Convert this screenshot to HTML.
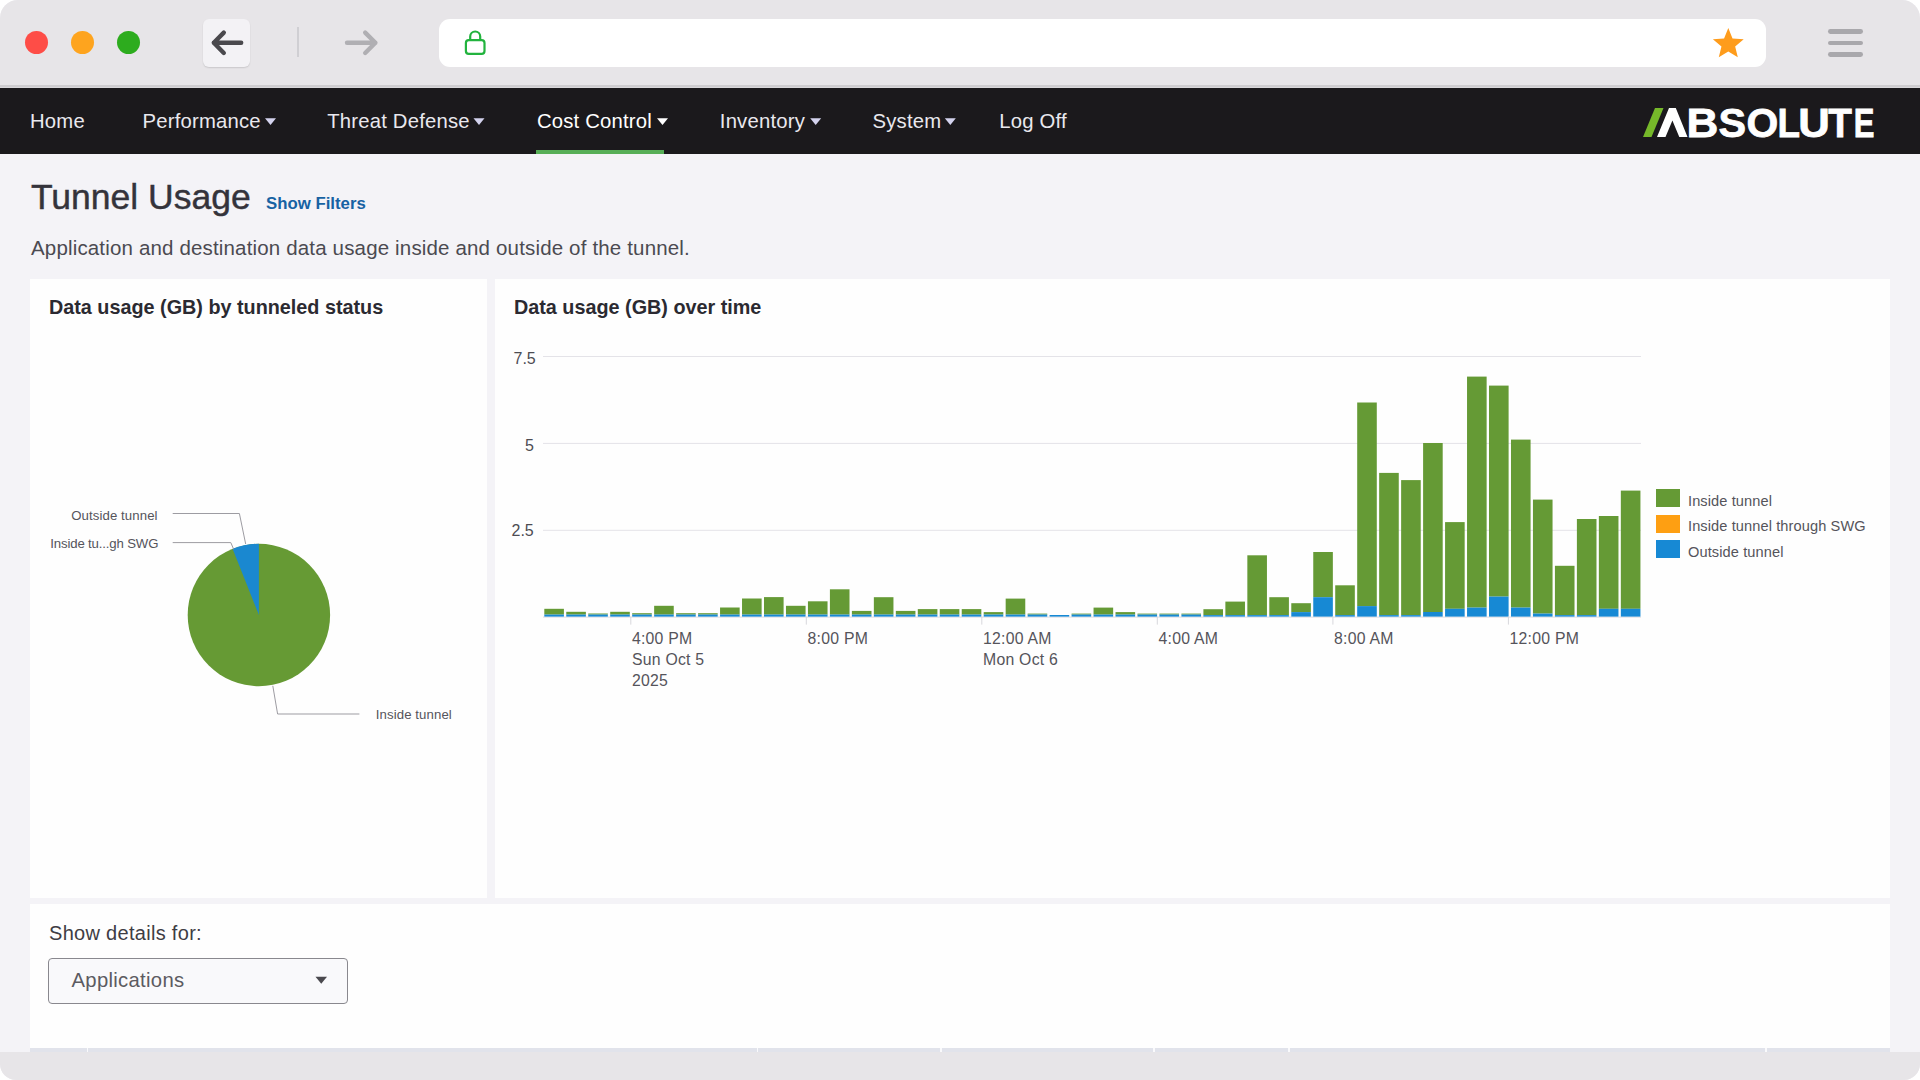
<!DOCTYPE html>
<html><head><meta charset="utf-8"><style>
html,body{margin:0;padding:0;background:#ffffff;}
body{width:1920px;height:1080px;position:relative;overflow:hidden;font-family:"Liberation Sans",sans-serif;}
#win{position:absolute;left:0;top:0;width:1920px;height:1080px;border-radius:18px 18px 16px 16px;overflow:hidden;background:#f4f3f7;}
.t{position:absolute;white-space:nowrap;line-height:1;}
</style></head><body><div id="win">
<div style="position:absolute;left:0;top:0;width:1920px;height:85px;background:#e7e5e8"></div>
<div style="position:absolute;left:0;top:85px;width:1920px;height:2px;background:#cfcdd0"></div>
<div style="position:absolute;left:0;top:87px;width:1920px;height:1px;background:#dad8db"></div>
<div style="position:absolute;left:25.4px;top:31.0px;width:22.8px;height:22.8px;border-radius:50%;background:#fe4d47"></div>
<div style="position:absolute;left:71.2px;top:31.0px;width:22.8px;height:22.8px;border-radius:50%;background:#fea41e"></div>
<div style="position:absolute;left:117.1px;top:31.0px;width:22.8px;height:22.8px;border-radius:50%;background:#2dac1e"></div>
<div style="position:absolute;left:203px;top:19px;width:47px;height:48px;border-radius:6px;background:#f3f2f5;box-shadow:0 1px 1.5px rgba(0,0,0,0.13)"></div>
<div style="position:absolute;left:297.2px;top:27px;width:1.5px;height:30px;background:#d0cfd3"></div>
<div style="position:absolute;left:439px;top:19px;width:1327px;height:47.5px;border-radius:11px;background:#ffffff"></div>
<div style="position:absolute;left:1828px;top:28.9px;width:35px;height:4.8px;border-radius:2.4px;background:#a9a8ac"></div>
<div style="position:absolute;left:1828px;top:40.6px;width:35px;height:4.8px;border-radius:2.4px;background:#a9a8ac"></div>
<div style="position:absolute;left:1828px;top:51.9px;width:35px;height:4.8px;border-radius:2.4px;background:#a9a8ac"></div>
<svg style="position:absolute;left:0;top:0" width="1920" height="88">
<path d="M241.2 42.8 H213.8 M223.8 32.6 L213.8 42.8 L223.8 53" fill="none" stroke="#4a494d" stroke-width="4.4" stroke-linecap="round" stroke-linejoin="round"/>
<path d="M347 42.8 H375.4 M365.2 32.6 L375.4 42.8 L365.2 53" fill="none" stroke="#b0afb3" stroke-width="4.4" stroke-linecap="round" stroke-linejoin="round"/>
<path d="M470.2 39.5 V36.5 A5 5 0 0 1 480.2 36.5 V39.5" fill="none" stroke="#22b33e" stroke-width="2.2"/>
<rect x="465.9" y="40.2" width="18.6" height="13.6" rx="2.8" fill="none" stroke="#22b33e" stroke-width="2.2"/>
<polygon points="1728.30,28.00 1732.53,38.38 1743.71,39.19 1735.15,46.42 1737.82,57.31 1728.30,51.40 1718.78,57.31 1721.45,46.42 1712.89,39.19 1724.07,38.38" fill="#fe9c1c"/>
</svg>
<div style="position:absolute;left:0;top:88px;width:1920px;height:66px;background:#1b191c"></div>
<div class="t" style="left:30.00px;top:110.62px;font-size:20.3px;color:#e9e8ee;font-weight:400;letter-spacing:0.2px;">Home</div>
<div class="t" style="left:142.50px;top:110.62px;font-size:20.3px;color:#e9e8ee;font-weight:400;letter-spacing:0.2px;">Performance</div>
<div class="t" style="left:327.20px;top:110.62px;font-size:20.3px;color:#e9e8ee;font-weight:400;letter-spacing:0.2px;">Threat Defense</div>
<div class="t" style="left:536.90px;top:110.62px;font-size:20.3px;color:#ffffff;font-weight:400;letter-spacing:0.2px;">Cost Control</div>
<div class="t" style="left:719.80px;top:110.62px;font-size:20.3px;color:#e9e8ee;font-weight:400;letter-spacing:0.2px;">Inventory</div>
<div class="t" style="left:872.50px;top:110.62px;font-size:20.3px;color:#e9e8ee;font-weight:400;letter-spacing:0.2px;">System</div>
<div class="t" style="left:999.20px;top:110.62px;font-size:20.3px;color:#e9e8ee;font-weight:400;letter-spacing:0.2px;">Log Off</div>
<svg style="position:absolute;left:0;top:88px;overflow:visible" width="1920" height="66"><g transform="translate(0,-88)"><polygon points="265,118.3 276,118.3 270.5,125" fill="#d4d3ee"/><polygon points="473.5,118.3 484.5,118.3 479.0,125" fill="#d4d3ee"/><polygon points="657,118.3 668,118.3 662.5,125" fill="#ffffff"/><polygon points="810.2,118.3 821.2,118.3 815.7,125" fill="#d4d3ee"/><polygon points="944.8,118.3 955.8,118.3 950.3,125" fill="#d4d3ee"/></g></svg>
<div style="position:absolute;left:536px;top:150px;width:128px;height:4px;background:#57ae57"></div>
<svg style="position:absolute;left:1630px;top:95px" width="260" height="55" viewBox="1630 95 260 55"><polygon points="1643,137 1651.5,137 1663.5,108 1655,108" fill="#76b82a"/><polygon points="1657,137 1665.5,137 1672.4,120.5 1679.3,137 1687.5,137 1675.8,108 1669,108" fill="#ffffff"/><g transform="translate(1686.45,136.6) scale(0.04410,0.04099)"><text x="0" y="0" font-family="Liberation Sans" font-weight="700" font-size="1000" fill="#ffffff" stroke="#ffffff" stroke-width="19">B</text></g><g transform="translate(1718.60,136.6) scale(0.04140,0.04099)"><text x="0" y="0" font-family="Liberation Sans" font-weight="700" font-size="1000" fill="#ffffff" stroke="#ffffff" stroke-width="19">S</text></g><g transform="translate(1746.52,136.6) scale(0.04086,0.04099)"><text x="0" y="0" font-family="Liberation Sans" font-weight="700" font-size="1000" fill="#ffffff" stroke="#ffffff" stroke-width="19">O</text></g><g transform="translate(1777.53,136.6) scale(0.03684,0.04099)"><text x="0" y="0" font-family="Liberation Sans" font-weight="700" font-size="1000" fill="#ffffff" stroke="#ffffff" stroke-width="19">L</text></g><g transform="translate(1798.37,136.6) scale(0.04376,0.04099)"><text x="0" y="0" font-family="Liberation Sans" font-weight="700" font-size="1000" fill="#ffffff" stroke="#ffffff" stroke-width="19">U</text></g><g transform="translate(1828.37,136.6) scale(0.03871,0.04099)"><text x="0" y="0" font-family="Liberation Sans" font-weight="700" font-size="1000" fill="#ffffff" stroke="#ffffff" stroke-width="19">T</text></g><g transform="translate(1853.82,136.6) scale(0.03102,0.04099)"><text x="0" y="0" font-family="Liberation Sans" font-weight="700" font-size="1000" fill="#ffffff" stroke="#ffffff" stroke-width="19">E</text></g></svg>
<div class="t" style="left:31.00px;top:180.35px;font-size:35.5px;color:#34333b;font-weight:400;letter-spacing:0px;-webkit-text-stroke:0.45px #34333b;">Tunnel Usage</div>
<div class="t" style="left:266.00px;top:195.58px;font-size:16.8px;color:#1762a3;font-weight:700;letter-spacing:0px;">Show Filters</div>
<div class="t" style="left:31.00px;top:237.95px;font-size:20.5px;color:#4b4a51;font-weight:400;letter-spacing:0.16px;">Application and destination data usage inside and outside of the tunnel.</div>
<div style="position:absolute;left:30px;top:279px;width:457px;height:619px;background:#fefefe"></div>
<div style="position:absolute;left:495px;top:279px;width:1395px;height:619px;background:#fefefe"></div>
<div style="position:absolute;left:30px;top:904px;width:1860px;height:144px;background:#fefefe"></div>
<div class="t" style="left:49.00px;top:297.84px;font-size:19.8px;color:#2b2a31;font-weight:700;letter-spacing:0px;">Data usage (GB) by tunneled status</div>
<div class="t" style="left:514.00px;top:297.84px;font-size:19.8px;color:#2b2a31;font-weight:700;letter-spacing:0px;">Data usage (GB) over time</div>
<svg style="position:absolute;left:0;top:0" width="500" height="900">
<circle cx="258.9" cy="615" r="71.2" fill="#669a34"/>
<path d="M258.9,615 L232.57,548.85 A71.2,71.2 0 0 1 258.9,543.8 Z" fill="#1a88d0"/>
<path d="M172.7 513.5 H239.4 L245.7 544.1" fill="none" stroke="#9d9ca2" stroke-width="1"/>
<path d="M172.7 542.6 H230.8 L233.7 549.3" fill="none" stroke="#9d9ca2" stroke-width="1"/>
<path d="M359.4 714 H277.6 L272.8 685.8" fill="none" stroke="#9d9ca2" stroke-width="1"/>
</svg>
<div class="t" style="left:71.20px;top:508.83px;font-size:13.2px;color:#55545b;font-weight:400;letter-spacing:0.1px;">Outside tunnel</div>
<div class="t" style="left:50.30px;top:536.73px;font-size:13.2px;color:#55545b;font-weight:400;letter-spacing:-0.15px;">Inside tu...gh SWG</div>
<div class="t" style="left:375.80px;top:707.83px;font-size:13.2px;color:#55545b;font-weight:400;letter-spacing:0.1px;">Inside tunnel</div>
<svg style="position:absolute;left:0;top:0" width="1920" height="900"><rect x="543" y="356.0" width="1098" height="1" fill="#e4e3e8"/><rect x="543" y="442.9" width="1098" height="1" fill="#e4e3e8"/><rect x="543" y="529.8" width="1098" height="1" fill="#e4e3e8"/><rect x="543" y="616.6" width="1098" height="1" fill="#dcdbe0"/><rect x="544.30" y="608.80" width="19.6" height="5.80" fill="#659a35"/><rect x="544.30" y="614.60" width="19.6" height="2.00" fill="#1789d4"/><rect x="566.27" y="611.80" width="19.6" height="2.80" fill="#659a35"/><rect x="566.27" y="614.60" width="19.6" height="2.00" fill="#1789d4"/><rect x="588.24" y="613.50" width="19.6" height="1.10" fill="#659a35"/><rect x="588.24" y="614.60" width="19.6" height="2.00" fill="#1789d4"/><rect x="610.21" y="611.80" width="19.6" height="2.80" fill="#659a35"/><rect x="610.21" y="614.60" width="19.6" height="2.00" fill="#1789d4"/><rect x="632.18" y="613.20" width="19.6" height="1.40" fill="#659a35"/><rect x="632.18" y="614.60" width="19.6" height="2.00" fill="#1789d4"/><rect x="654.15" y="605.80" width="19.6" height="8.80" fill="#659a35"/><rect x="654.15" y="614.60" width="19.6" height="2.00" fill="#1789d4"/><rect x="676.12" y="613.20" width="19.6" height="1.40" fill="#659a35"/><rect x="676.12" y="614.60" width="19.6" height="2.00" fill="#1789d4"/><rect x="698.09" y="613.20" width="19.6" height="1.40" fill="#659a35"/><rect x="698.09" y="614.60" width="19.6" height="2.00" fill="#1789d4"/><rect x="720.06" y="607.50" width="19.6" height="7.10" fill="#659a35"/><rect x="720.06" y="614.60" width="19.6" height="2.00" fill="#1789d4"/><rect x="742.03" y="598.50" width="19.6" height="16.10" fill="#659a35"/><rect x="742.03" y="614.60" width="19.6" height="2.00" fill="#1789d4"/><rect x="764.00" y="597.10" width="19.6" height="17.50" fill="#659a35"/><rect x="764.00" y="614.60" width="19.6" height="2.00" fill="#1789d4"/><rect x="785.97" y="605.80" width="19.6" height="8.80" fill="#659a35"/><rect x="785.97" y="614.60" width="19.6" height="2.00" fill="#1789d4"/><rect x="807.94" y="601.30" width="19.6" height="13.30" fill="#659a35"/><rect x="807.94" y="614.60" width="19.6" height="2.00" fill="#1789d4"/><rect x="829.91" y="589.30" width="19.6" height="25.30" fill="#659a35"/><rect x="829.91" y="614.60" width="19.6" height="2.00" fill="#1789d4"/><rect x="851.88" y="610.90" width="19.6" height="3.70" fill="#659a35"/><rect x="851.88" y="614.60" width="19.6" height="2.00" fill="#1789d4"/><rect x="873.85" y="597.20" width="19.6" height="17.40" fill="#659a35"/><rect x="873.85" y="614.60" width="19.6" height="2.00" fill="#1789d4"/><rect x="895.82" y="610.90" width="19.6" height="3.70" fill="#659a35"/><rect x="895.82" y="614.60" width="19.6" height="2.00" fill="#1789d4"/><rect x="917.79" y="609.10" width="19.6" height="5.50" fill="#659a35"/><rect x="917.79" y="614.60" width="19.6" height="2.00" fill="#1789d4"/><rect x="939.76" y="609.10" width="19.6" height="5.50" fill="#659a35"/><rect x="939.76" y="614.60" width="19.6" height="2.00" fill="#1789d4"/><rect x="961.73" y="609.10" width="19.6" height="5.50" fill="#659a35"/><rect x="961.73" y="614.60" width="19.6" height="2.00" fill="#1789d4"/><rect x="983.70" y="612.10" width="19.6" height="2.50" fill="#659a35"/><rect x="983.70" y="614.60" width="19.6" height="2.00" fill="#1789d4"/><rect x="1005.67" y="598.60" width="19.6" height="16.00" fill="#659a35"/><rect x="1005.67" y="614.60" width="19.6" height="2.00" fill="#1789d4"/><rect x="1027.64" y="613.60" width="19.6" height="1.00" fill="#659a35"/><rect x="1027.64" y="614.60" width="19.6" height="2.00" fill="#1789d4"/><rect x="1049.61" y="615.00" width="19.6" height="0.00" fill="#659a35"/><rect x="1049.61" y="615.00" width="19.6" height="1.60" fill="#1789d4"/><rect x="1071.58" y="613.60" width="19.6" height="1.00" fill="#659a35"/><rect x="1071.58" y="614.60" width="19.6" height="2.00" fill="#1789d4"/><rect x="1093.55" y="607.60" width="19.6" height="7.00" fill="#659a35"/><rect x="1093.55" y="614.60" width="19.6" height="2.00" fill="#1789d4"/><rect x="1115.52" y="612.10" width="19.6" height="2.50" fill="#659a35"/><rect x="1115.52" y="614.60" width="19.6" height="2.00" fill="#1789d4"/><rect x="1137.49" y="613.60" width="19.6" height="1.00" fill="#659a35"/><rect x="1137.49" y="614.60" width="19.6" height="2.00" fill="#1789d4"/><rect x="1159.46" y="613.60" width="19.6" height="1.00" fill="#659a35"/><rect x="1159.46" y="614.60" width="19.6" height="2.00" fill="#1789d4"/><rect x="1181.43" y="613.60" width="19.6" height="1.00" fill="#659a35"/><rect x="1181.43" y="614.60" width="19.6" height="2.00" fill="#1789d4"/><rect x="1203.40" y="609.20" width="19.6" height="5.90" fill="#659a35"/><rect x="1203.40" y="615.10" width="19.6" height="1.50" fill="#1789d4"/><rect x="1225.37" y="601.60" width="19.6" height="13.50" fill="#659a35"/><rect x="1225.37" y="615.10" width="19.6" height="1.50" fill="#1789d4"/><rect x="1247.34" y="555.30" width="19.6" height="59.80" fill="#659a35"/><rect x="1247.34" y="615.10" width="19.6" height="1.50" fill="#1789d4"/><rect x="1269.31" y="597.20" width="19.6" height="17.90" fill="#659a35"/><rect x="1269.31" y="615.10" width="19.6" height="1.50" fill="#1789d4"/><rect x="1291.28" y="603.20" width="19.6" height="8.90" fill="#659a35"/><rect x="1291.28" y="612.10" width="19.6" height="4.50" fill="#1789d4"/><rect x="1313.25" y="552.00" width="19.6" height="45.20" fill="#659a35"/><rect x="1313.25" y="597.20" width="19.6" height="19.40" fill="#1789d4"/><rect x="1335.22" y="585.30" width="19.6" height="29.80" fill="#659a35"/><rect x="1335.22" y="615.10" width="19.6" height="1.50" fill="#1789d4"/><rect x="1357.19" y="402.50" width="19.6" height="203.60" fill="#659a35"/><rect x="1357.19" y="606.10" width="19.6" height="10.50" fill="#1789d4"/><rect x="1379.16" y="472.90" width="19.6" height="142.20" fill="#659a35"/><rect x="1379.16" y="615.10" width="19.6" height="1.50" fill="#1789d4"/><rect x="1401.13" y="480.10" width="19.6" height="135.00" fill="#659a35"/><rect x="1401.13" y="615.10" width="19.6" height="1.50" fill="#1789d4"/><rect x="1423.10" y="443.00" width="19.6" height="169.00" fill="#659a35"/><rect x="1423.10" y="612.00" width="19.6" height="4.60" fill="#1789d4"/><rect x="1445.07" y="522.10" width="19.6" height="86.70" fill="#659a35"/><rect x="1445.07" y="608.80" width="19.6" height="7.80" fill="#1789d4"/><rect x="1467.04" y="376.60" width="19.6" height="231.00" fill="#659a35"/><rect x="1467.04" y="607.60" width="19.6" height="9.00" fill="#1789d4"/><rect x="1489.01" y="385.60" width="19.6" height="211.00" fill="#659a35"/><rect x="1489.01" y="596.60" width="19.6" height="20.00" fill="#1789d4"/><rect x="1510.98" y="439.60" width="19.6" height="168.00" fill="#659a35"/><rect x="1510.98" y="607.60" width="19.6" height="9.00" fill="#1789d4"/><rect x="1532.95" y="499.60" width="19.6" height="114.00" fill="#659a35"/><rect x="1532.95" y="613.60" width="19.6" height="3.00" fill="#1789d4"/><rect x="1554.92" y="565.80" width="19.6" height="49.30" fill="#659a35"/><rect x="1554.92" y="615.10" width="19.6" height="1.50" fill="#1789d4"/><rect x="1576.89" y="519.00" width="19.6" height="96.10" fill="#659a35"/><rect x="1576.89" y="615.10" width="19.6" height="1.50" fill="#1789d4"/><rect x="1598.86" y="516.00" width="19.6" height="92.80" fill="#659a35"/><rect x="1598.86" y="608.80" width="19.6" height="7.80" fill="#1789d4"/><rect x="1620.83" y="490.60" width="19.6" height="118.20" fill="#659a35"/><rect x="1620.83" y="608.80" width="19.6" height="7.80" fill="#1789d4"/><rect x="630.3" y="616.6" width="1" height="8" fill="#d8d7dc"/><rect x="805.8" y="616.6" width="1" height="8" fill="#d8d7dc"/><rect x="981.3" y="616.6" width="1" height="8" fill="#d8d7dc"/><rect x="1156.8" y="616.6" width="1" height="8" fill="#d8d7dc"/><rect x="1332.4" y="616.6" width="1" height="8" fill="#d8d7dc"/><rect x="1507.9" y="616.6" width="1" height="8" fill="#d8d7dc"/></svg>
<div class="t" style="left:513.50px;top:350.56px;font-size:16px;color:#4d4c53;font-weight:400;letter-spacing:0px;">7.5</div>
<div class="t" style="left:525.00px;top:437.86px;font-size:16px;color:#4d4c53;font-weight:400;letter-spacing:0px;">5</div>
<div class="t" style="left:511.50px;top:523.46px;font-size:16px;color:#4d4c53;font-weight:400;letter-spacing:0px;">2.5</div>
<div class="t" style="left:631.90px;top:631.13px;font-size:15.8px;color:#55545b;font-weight:400;letter-spacing:0.25px;">4:00 PM</div>
<div class="t" style="left:631.90px;top:652.13px;font-size:15.8px;color:#55545b;font-weight:400;letter-spacing:0.25px;">Sun Oct 5</div>
<div class="t" style="left:631.90px;top:673.13px;font-size:15.8px;color:#55545b;font-weight:400;letter-spacing:0.25px;">2025</div>
<div class="t" style="left:807.50px;top:631.13px;font-size:15.8px;color:#55545b;font-weight:400;letter-spacing:0.25px;">8:00 PM</div>
<div class="t" style="left:983.00px;top:631.13px;font-size:15.8px;color:#55545b;font-weight:400;letter-spacing:0.25px;">12:00 AM</div>
<div class="t" style="left:983.00px;top:652.13px;font-size:15.8px;color:#55545b;font-weight:400;letter-spacing:0.25px;">Mon Oct 6</div>
<div class="t" style="left:1158.50px;top:631.13px;font-size:15.8px;color:#55545b;font-weight:400;letter-spacing:0.25px;">4:00 AM</div>
<div class="t" style="left:1334.00px;top:631.13px;font-size:15.8px;color:#55545b;font-weight:400;letter-spacing:0.25px;">8:00 AM</div>
<div class="t" style="left:1509.50px;top:631.13px;font-size:15.8px;color:#55545b;font-weight:400;letter-spacing:0.25px;">12:00 PM</div>
<div style="position:absolute;left:1656px;top:489.0px;width:24px;height:18px;background:#659a35"></div>
<div class="t" style="left:1688.00px;top:493.94px;font-size:14.6px;color:#55545b;font-weight:400;letter-spacing:0.1px;">Inside tunnel</div>
<div style="position:absolute;left:1656px;top:514.5px;width:24px;height:18px;background:#fe9f12"></div>
<div class="t" style="left:1688.00px;top:519.44px;font-size:14.6px;color:#55545b;font-weight:400;letter-spacing:0.1px;">Inside tunnel through SWG</div>
<div style="position:absolute;left:1656px;top:540.0px;width:24px;height:18px;background:#1789d4"></div>
<div class="t" style="left:1688.00px;top:544.94px;font-size:14.6px;color:#55545b;font-weight:400;letter-spacing:0.1px;">Outside tunnel</div>
<div class="t" style="left:49.00px;top:923.07px;font-size:20px;color:#3e3d44;font-weight:400;letter-spacing:0.3px;">Show details for:</div>
<div style="position:absolute;left:48px;top:957.5px;width:299.5px;height:46.75px;box-sizing:border-box;border:1.5px solid #89888e;border-radius:4px;background:#f9f9fb"></div>
<div class="t" style="left:71.50px;top:969.82px;font-size:20.3px;color:#5c5b61;font-weight:400;letter-spacing:0.3px;">Applications</div>
<svg style="position:absolute;left:0;top:0" width="400" height="1080"><polygon points="315.5,976.8 327,976.8 321.25,983.8" fill="#4a494e"/></svg>
<div style="position:absolute;left:30px;top:1048px;width:1860px;height:4px;background:#e1e3eb"></div>
<div style="position:absolute;left:86.75px;top:1048px;width:1.5px;height:4px;background:#fafafc"></div>
<div style="position:absolute;left:756.75px;top:1048px;width:1.5px;height:4px;background:#fafafc"></div>
<div style="position:absolute;left:940.25px;top:1048px;width:1.5px;height:4px;background:#fafafc"></div>
<div style="position:absolute;left:1153.25px;top:1048px;width:1.5px;height:4px;background:#fafafc"></div>
<div style="position:absolute;left:1288.25px;top:1048px;width:1.5px;height:4px;background:#fafafc"></div>
<div style="position:absolute;left:1765.25px;top:1048px;width:1.5px;height:4px;background:#fafafc"></div>
<div style="position:absolute;left:0;top:1052px;width:1920px;height:28px;background:#e7e5e8"></div>
</div></body></html>
